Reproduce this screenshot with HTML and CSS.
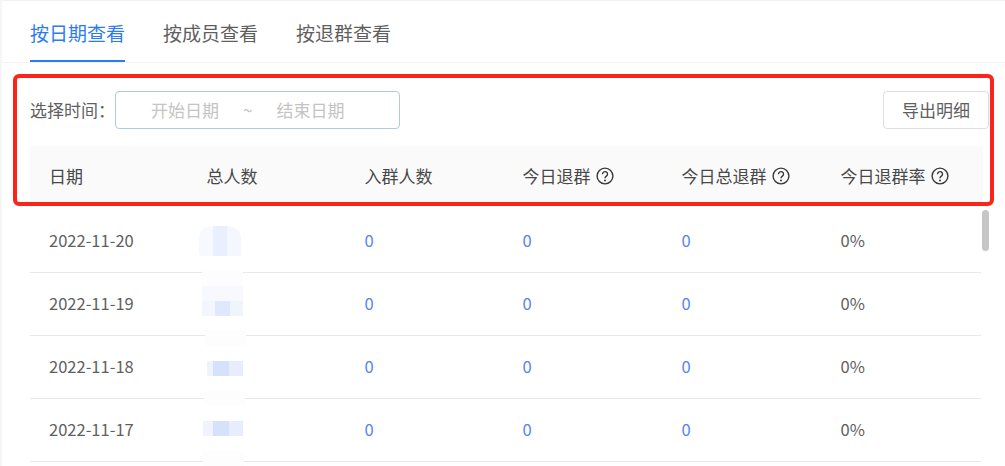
FILE: index.html
```html
<!DOCTYPE html>
<html lang="zh-CN">
<head>
<meta charset="utf-8">
<title>退群统计</title>
<link rel="stylesheet" href="styles.css">
</head>
<body>
<div class="page">
  <nav class="tabs">
    <a class="tab active">按日期查看</a>
    <a class="tab">按成员查看</a>
    <a class="tab">按退群查看</a>
  </nav>
  <div class="toolbar">
    <label class="label">选择时间：</label>
    <div class="range">
      <span class="ph">开始日期</span>
      <span class="sep">~</span>
      <span class="ph">结束日期</span>
    </div>
    <button class="export">导出明细</button>
  </div>
  <div class="row head">
    <div>日期</div>
    <div>总人数</div>
    <div>入群人数</div>
    <div class="hc">今日退群<svg class="help" viewBox="0 0 18 18"><circle cx="9" cy="9" r="7.9"/><path d="M6.5 7.2a2.5 2.5 0 1 1 3.9 2c-.9.6-1.4 1-1.4 2.1"/><circle class="dot" cx="9" cy="13.4" r="1"/></svg></div>
    <div class="hc">今日总退群<svg class="help" viewBox="0 0 18 18"><circle cx="9" cy="9" r="7.9"/><path d="M6.5 7.2a2.5 2.5 0 1 1 3.9 2c-.9.6-1.4 1-1.4 2.1"/><circle class="dot" cx="9" cy="13.4" r="1"/></svg></div>
    <div class="hc">今日退群率<svg class="help" viewBox="0 0 18 18"><circle cx="9" cy="9" r="7.9"/><path d="M6.5 7.2a2.5 2.5 0 1 1 3.9 2c-.9.6-1.4 1-1.4 2.1"/><circle class="dot" cx="9" cy="13.4" r="1"/></svg></div>
  </div>
  <div class="body">
    <div class="row">
      <div>2022-11-20</div>
      <div class="blur"><i class="m m1"></i></div>
      <div class="num">0</div><div class="num">0</div><div class="num">0</div><div>0%</div>
    </div>
    <div class="row">
      <div>2022-11-19</div>
      <div class="blur"><i class="m m2"></i></div>
      <div class="num">0</div><div class="num">0</div><div class="num">0</div><div>0%</div>
    </div>
    <div class="row">
      <div>2022-11-18</div>
      <div class="blur"><i class="m f3"></i><i class="m m3"></i></div>
      <div class="num">0</div><div class="num">0</div><div class="num">0</div><div>0%</div>
    </div>
    <div class="row">
      <div>2022-11-17</div>
      <div class="blur"><i class="m f4"></i><i class="m m4"></i><i class="m f5"></i></div>
      <div class="num">0</div><div class="num">0</div><div class="num">0</div><div>0%</div>
    </div>
  </div>
  <div class="thumb"></div>
  <div class="mark"></div>
</div>
</body>
</html>
```
FILE: styles.css
```css
* { box-sizing: border-box; }
html, body { margin: 0; height: 100%; overflow: hidden; }
body {
  background: #fff;
  color: #5f5f5f;
  font-family: "Noto Sans CJK SC", "Noto Sans", sans-serif;
  font-size: 17px;
}
.page {
  position: relative;
  width: 1005px;
  height: 466px;
  overflow: hidden;
  border-top: 1px solid #f1f2f6;
  border-left: 2px solid #f5f6f9;
}
.tabs {
  display: flex;
  gap: 38px;
  height: 62px;
  padding-left: 28px;
  border-bottom: 1px solid #f2f2f2;
}
.tab {
  height: 61px;
  font-size: 19px;
  line-height: 64px;
  color: #5f5f5f;
  border-bottom: 2px solid transparent;
}
.tab.active { color: #2d7bf4; border-bottom-color: #2d7bf4; }
.toolbar {
  display: flex;
  align-items: center;
  height: 83px;
  padding: 10px 16px 0 28px;
}
.label { width: 85px; white-space: nowrap; }
.range {
  display: flex;
  align-items: center;
  width: 285px;
  height: 38px;
  padding-left: 35px;
  border: 1px solid #aecbe4;
  border-radius: 4px;
  color: #c4c4c4;
}
.sep { margin: 0 24px; }
.export {
  margin-left: auto;
  width: 106px;
  height: 38px;
  border: 1px solid #dedede;
  border-radius: 4px;
  background: #fff;
  color: #5f5f5f;
  font: inherit;
  padding: 0;
}
.row {
  display: grid;
  grid-template-columns: 157.5px 158px 158px 159px 159px 1fr;
  align-items: center;
  width: 951px;
  height: 63px;
  margin-left: 28px;
  padding: 0 0 3px 19px;
  border-bottom: 1px solid #e8e8e8;
  font-size: 16.5px;
}
.head {
  height: 59px;
  width: 953px;
  padding-bottom: 0;
  background: #fafafa;
  border-bottom: 0;
  color: #484848;
  font-size: 17px;
}
.hc { display: flex; align-items: center; gap: 5px; white-space: nowrap; }
.help { width: 18px; height: 18px; fill: none; stroke: #383838; stroke-width: 1.4; }
.help .dot { fill: #383838; stroke: none; }
.body { padding-top: 5px; }
.num { color: #5585f5; }
.blur { position: relative; height: 100%; }
.m { position: absolute; display: block; }
.m1 {
  left: -8px; top: 16px; width: 42px; height: 30px;
  border-radius: 12px 12px 0 4px;
  background: linear-gradient(90deg, #f7f9ff 0 33%, #e9effe 33% 66%, #f4f7ff 66%);
}
.m2 {
  left: -5px; top: -2px; width: 41px; height: 45px;
  background:
    linear-gradient(#fdfdfd 0 15px, transparent 15px),
    linear-gradient(#0000 15px, #f7f9ff 15px 30px, transparent 30px),
    linear-gradient(90deg, #f4f6fe 0 32%, #e0e8fb 32% 68%, #eff4fd 68%);
}
.f3 { left: -2px; top: -6px; width: 41px; height: 16px; background: #fdfdfd; }
.f4 { left: -3px; top: -8px; width: 41px; height: 15px; background: #fdfdfd; }
.f5 { left: -4px; top: 52px; width: 41px; height: 15px; background: #fdfdfd; }
.m3 {
  left: 0; top: 25px; width: 36px; height: 15px;
  background: linear-gradient(90deg, #eff3fe 0 17%, #d6e1fc 17% 60%, #e7edfd 60%);
}
.m4 {
  left: -4px; top: 22px; width: 40px; height: 15px;
  background: linear-gradient(90deg, #eff3fe 0 25%, #d6e1fc 25% 65%, #e7edfd 65%);
}
.thumb {
  position: absolute;
  left: 980px;
  top: 209px;
  width: 7px;
  height: 41px;
  border-radius: 4px;
  background: #c6c6c6;
}
.mark {
  position: absolute;
  left: 11px;
  top: 73px;
  width: 981px;
  height: 132px;
  border: 4px solid #fb2418;
  border-radius: 6px;
}
```
